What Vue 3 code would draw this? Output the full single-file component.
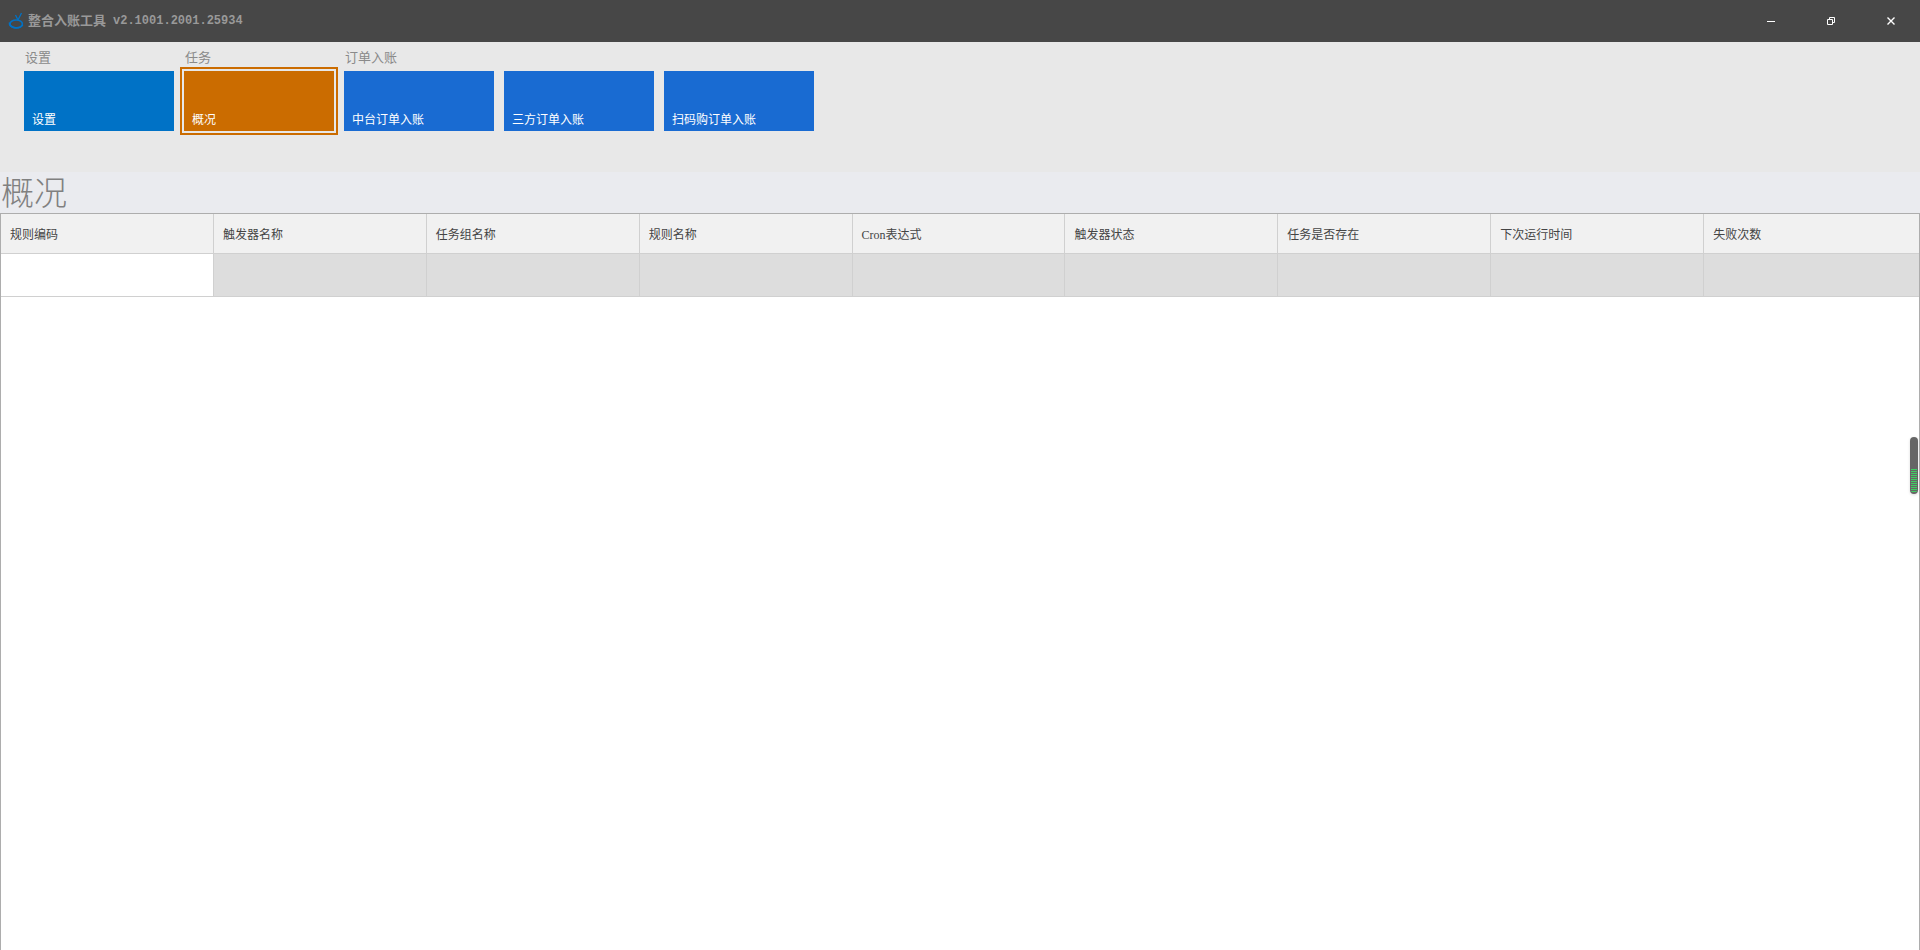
<script setup>
import { ref } from 'vue'

const active = ref('概况')
const groups = [
  { name: '设置', tone: 'azure', tiles: ['设置'] },
  { name: '任务', tone: 'orange', tiles: ['概况'] },
  { name: '订单入账', tone: 'blue', tiles: ['中台订单入账', '三方订单入账', '扫码购订单入账'] },
]
const columns = ['规则编码', '触发器名称', '任务组名称', '规则名称', 'Cron表达式', '触发器状态', '任务是否存在', '下次运行时间', '失败次数']
</script>

<template>
  <div class="window">
    <header class="titlebar">
      <svg class="logo" width="16" height="18" viewBox="0 0 16 18" fill="none" stroke="#0072c6" aria-hidden="true">
        <ellipse cx="8.200" cy="12" rx="6.200" ry="4" stroke-width="1.600" />
        <path d="M1.500 10.500c-.6 5 9 7.500 13.300 2.500" stroke-width="1.600" />
        <path d="M10 8 7.500 3M10 8 13.500 1" stroke-width="1.300" />
      </svg>
      <span class="title">整合入账工具</span>
      <span class="version">v2.1001.2001.25934</span>
      <div class="controls">
        <button type="button" aria-label="最小化">
          <svg width="10" height="10" viewBox="0 0 10 10"><path d="M1 5.500h8" stroke="#fff" /></svg>
        </button>
        <button type="button" aria-label="还原">
          <svg width="10" height="10" viewBox="0 0 10 10" fill="none" stroke="#fff">
            <path d="M1.500 3.500h5v5h-5zM3.500 3.500v-2h5v5h-2" />
          </svg>
        </button>
        <button type="button" aria-label="关闭">
          <svg width="10" height="10" viewBox="0 0 10 10"><path d="M1.500 1.500l7 7M8.500 1.500l-7 7" stroke="#fff" stroke-width="1.400" /></svg>
        </button>
      </div>
    </header>

    <nav class="ribbon">
      <section v-for="g in groups" :key="g.name" class="group">
        <h2>{{ g.name }}</h2>
        <div class="tiles">
          <button
            v-for="t in g.tiles"
            :key="t"
            type="button"
            class="tile"
            :class="[g.tone, { active: active === t }]"
            @click="active = t"
          >{{ t }}</button>
        </div>
      </section>
    </nav>

    <h1>概况</h1>

    <main class="grid">
      <table>
        <thead>
          <tr><th v-for="c in columns" :key="c" scope="col">{{ c }}</th></tr>
        </thead>
        <tbody>
          <tr><td v-for="c in columns" :key="c"></td></tr>
        </tbody>
      </table>
    </main>

    <div class="meter"><div class="level"></div></div>
  </div>
</template>

<style>
body { margin: 0; }
</style>

<style scoped>
.window {
  position: relative;
  box-sizing: border-box;
  min-height: 100vh;
  display: flex;
  flex-direction: column;
  background: #fff;
  font-family: "Liberation Serif", "Noto Sans CJK SC", sans-serif;
  font-size: 12px;
  line-height: 16px;
}
.titlebar {
  display: flex;
  align-items: center;
  height: 42px;
  padding-left: 8px;
  background: #474747;
  color: #999;
  font-weight: 700;
}
.logo { margin-right: 4px; }
.title { font-size: 13px; }
.version {
  margin-left: 7px;
  font-family: "Liberation Mono", monospace;
}
.controls {
  display: flex;
  align-self: stretch;
  margin-left: auto;
}
.controls button {
  display: flex;
  align-items: center;
  justify-content: center;
  width: 60px;
  padding: 0 0 0 2px;
  border: 0;
  background: none;
}
.ribbon {
  display: flex;
  gap: 10px;
  height: 130px;
  box-sizing: border-box;
  padding: 8px 24px;
  background: #e8e8e8;
}
h2 {
  margin: 0 0 5px;
  padding-left: 1px;
  color: #8a8a8a;
  font-size: 13px;
  font-weight: 400;
  line-height: 16px;
}
.tiles { display: flex; gap: 10px; }
.tile {
  display: flex;
  align-items: flex-end;
  width: 150px;
  height: 60px;
  padding: 0 8px 3px;
  border: 0;
  color: #fff;
  font: inherit;
}
.azure { background: #0072c6; }
.orange { background: #cb6c00; }
.blue { background: #196bd2; }
.tile.active { outline: 2px solid #cb6c00; outline-offset: 2px; }
h1 {
  box-sizing: border-box;
  margin: 0;
  height: 41px;
  padding: 2px 0 0 1px;
  background: #eaebef;
  color: #808080;
  font-size: 33px;
  font-weight: 300;
  line-height: 41px;
}
.grid {
  flex: 1;
  border: 1px solid #adadad;
  border-bottom: 0;
}
table {
  width: 100%;
  table-layout: fixed;
  border-collapse: separate;
  border-spacing: 0;
}
th, td {
  box-sizing: border-box;
  padding: 0 9px;
  border: 0 solid #d0d0d0;
  border-width: 0 1px 1px 0;
  text-align: left;
}
th {
  width: 11.1%;
  height: 40px;
  padding-top: 2px;
  background: #f1f1f1;
  color: #444;
  font-weight: 400;
}
td { height: 43px; background: #ddd; }
td:first-child { background: #fff; }
th:last-child, td:last-child { border-right: 0; }
th:last-child { width: auto; }
.meter {
  position: absolute;
  top: 46%;
  right: 2px;
  display: flex;
  align-items: flex-end;
  width: 8px;
  height: 57px;
  box-sizing: border-box;
  padding: 1px;
  border-radius: 4px;
  background: #666;
  box-shadow: 0 1px 3px rgba(0, 0, 0, 0.15);
}
.level {
  width: 100%;
  height: 24px;
  border-radius: 0 0 3px 3px;
  background: repeating-linear-gradient(#3fce62 0 1px, #666 1px 2px);
}
</style>
